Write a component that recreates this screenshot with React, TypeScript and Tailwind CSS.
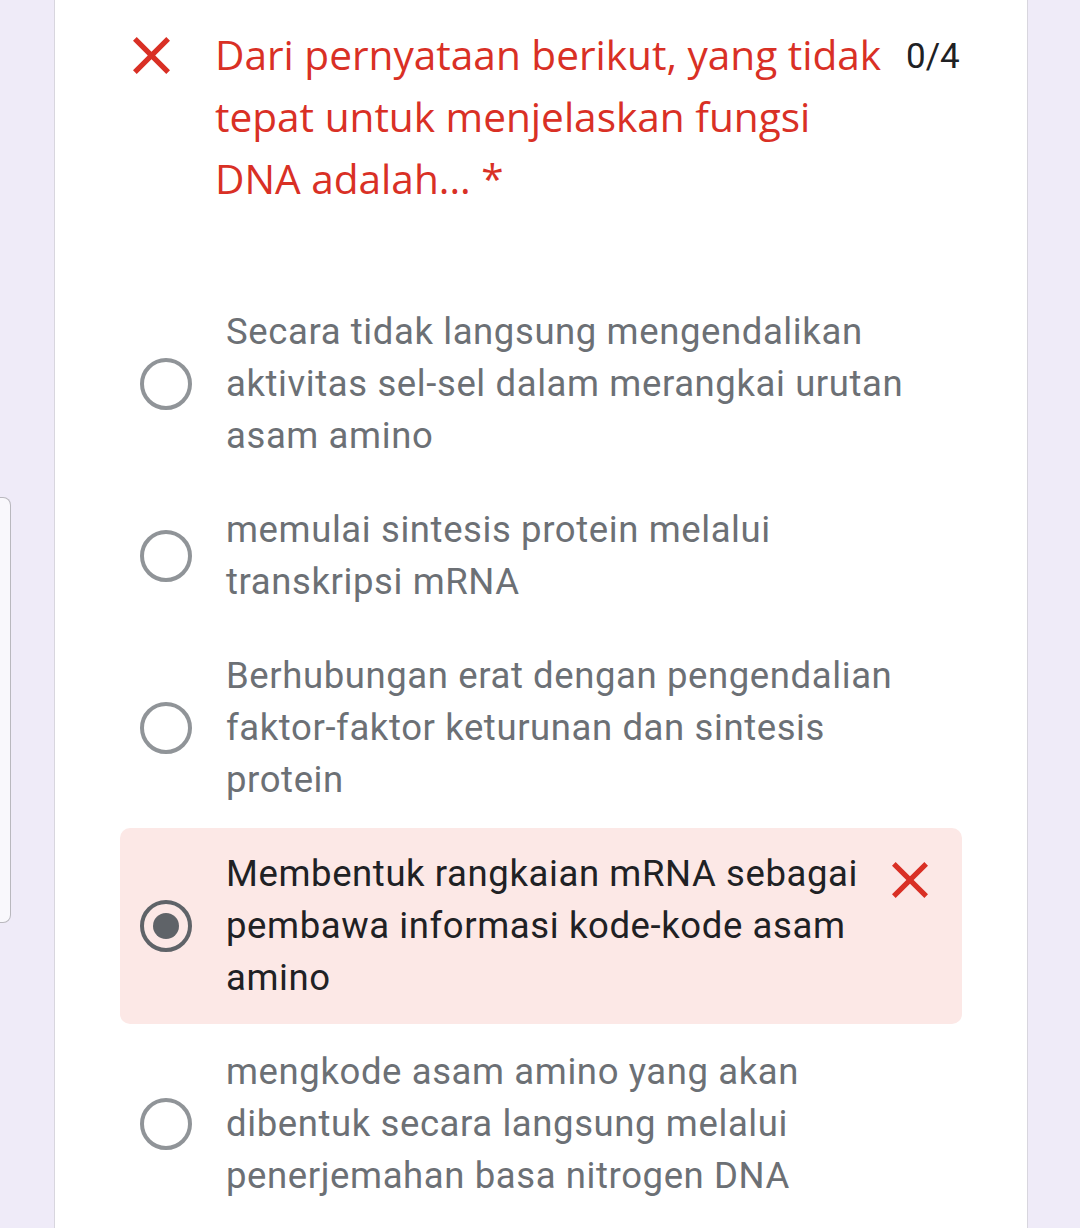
import React from "react";

const CloseIcon = ({ size }: { size: number }) => (
  <svg width={size} height={size} viewBox="5 5 14 14" className="block">
    <path
      fill="#d93025"
      d="M19 6.41L17.59 5 12 10.59 6.41 5 5 6.41 10.59 12 5 17.59 6.41 19 12 13.41 17.59 19 19 17.59 13.41 12z"
    />
  </svg>
);

const options: { lines: string[]; selected?: boolean }[] = [
  { lines: ["Secara tidak langsung mengendalikan", "aktivitas sel-sel dalam merangkai urutan", "asam amino"] },
  { lines: ["memulai sintesis protein melalui", "transkripsi mRNA"] },
  { lines: ["Berhubungan erat dengan pengendalian", "faktor-faktor keturunan dan sintesis", "protein"] },
  { lines: ["Membentuk rangkaian mRNA sebagai", "pembawa informasi kode-kode asam", "amino"], selected: true },
  { lines: ["mengkode asam amino yang akan", "dibentuk secara langsung melalui", "penerjemahan basa nitrogen DNA"] },
];

export default function App() {
  return (
    <div className="flex min-h-[1228px] h-[1228px] w-[1080px] overflow-hidden bg-[#efebf8]">
      <div className="w-[54px] shrink-0">
        <div className="mt-[497px] h-[426px] w-[11px] rounded-r-[8px] border border-l-0 border-[#b9b8be] bg-[#f9f8fc]" />
      </div>
      <div className="flex w-[974px] shrink-0 flex-col border-x border-[#d8d6de] bg-white">
        <div className="flex items-start pt-[24px]">
          <div className="ml-[78px] mt-[13px] w-[37px] shrink-0">
            <CloseIcon size={37} />
          </div>
          <div
            className="ml-[45px] w-[680px] text-[40.6px] leading-[62px] text-[#d93025]"
            style={{ fontFamily: '"Open Sans", sans-serif' }}
          >
            <span className="block">Dari pernyataan berikut, yang tidak</span>
            <span className="block">tepat untuk menjelaskan fungsi</span>
            <span className="block">DNA adalah... *</span>
          </div>
          <div
            className="ml-[11px] mt-[2px] text-[35px] leading-[62px] text-[#202124]"
            style={{ fontFamily: "Roboto, sans-serif" }}
          >
            0/4
          </div>
        </div>
        <div className="ml-[65px] mt-[76px] flex w-[842px] flex-col gap-[2px]">
          {options.map((o, i) => (
            <div
              key={i}
              className={`flex items-center rounded-[10px] py-[20px] pl-[20px] pr-[34px] ${o.selected ? "bg-[#fce8e6]" : ""}`}
            >
              {o.selected ? (
                <div className="flex h-[52px] w-[52px] shrink-0 items-center justify-center rounded-full border-[4px] border-[#5f6368]">
                  <div className="h-[26px] w-[26px] rounded-full bg-[#5f6368]" />
                </div>
              ) : (
                <div className="h-[52px] w-[52px] shrink-0 rounded-full border-[4px] border-[#909498]" />
              )}
              <div
                className={`ml-[34px] flex-1 text-[36.5px] leading-[52px] tracking-[0.6px] ${o.selected ? "text-[#202124]" : "text-[#6c7075]"}`}
                style={{ fontFamily: "Roboto, sans-serif" }}
              >
                {o.lines.map((l, j) => (
                  <span key={j} className="block whitespace-nowrap">
                    {l}
                  </span>
                ))}
              </div>
              {o.selected && (
                <div className="self-start mt-[14px] shrink-0">
                  <CloseIcon size={36} />
                </div>
              )}
            </div>
          ))}
        </div>
      </div>
    </div>
  );
}
